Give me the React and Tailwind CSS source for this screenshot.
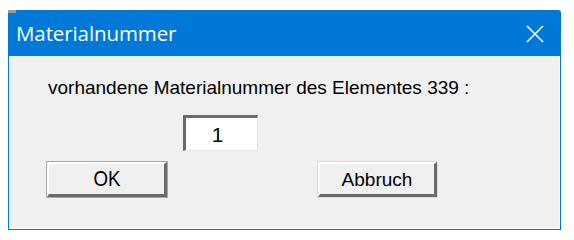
import React from "react";

export default function App() {
  return (
    <div className="w-[574px] h-[240px] bg-white relative overflow-hidden">
      <div className="absolute left-[8px] top-[10px] w-[8px] h-[3px] bg-[#9a9a9a]" />
      <div className="ml-[8px] mt-[10px] w-[553px] h-[220px] flex flex-col bg-[#0078d7] rounded-tr-[3px]">
        <div className="h-[46px] flex items-center justify-between pl-[8px] pr-[16px] shrink-0">
          <span className="text-white text-[20.5px] leading-none font-['Open_Sans',sans-serif] tracking-[-0.1px]">
            Materialnummer
          </span>
          <svg width="20" height="18" viewBox="0 0 20 18" className="mt-[2px]">
            <path d="M2 1 L18 17 M18 1 L2 17" stroke="white" strokeWidth="1.6" fill="none" />
          </svg>
        </div>
        <div className="flex-1 mx-[1px] mb-[1px] bg-[#f0f0f0] border-l border-r border-b border-white flex flex-col font-['Liberation_Sans',Arial,sans-serif] text-black">
          <div className="pl-[38px] pt-[20px] text-[19px] leading-[24px]">
            vorhandene Materialnummer des Elementes 339 :
          </div>
          <div className="pl-[173px] mt-[15px]">
            <div className="w-[75px] h-[36px] bg-white border-t-[3px] border-l-[3px] border-b border-r border-t-[#6a6a6a] border-l-[#6a6a6a] border-b-[#e4e4e4] border-r-[#e4e4e4] flex items-center justify-center pr-[8px] text-[21px] leading-none">
              1
            </div>
          </div>
          <div className="flex pl-[37px] mt-[11px] gap-[151px]">
            <div className="w-[120px] h-[35px] bg-[#f0f0f0] border-t-2 border-l-2 border-b-[3px] border-r-[3px] border-t-[#ffffff] border-l-[#ffffff] border-b-[#6a6a6a] border-r-[#6a6a6a] shadow-[0_0_0_1px_#a8a8a8] flex items-center justify-center text-[22px] leading-none">
              <span className="inline-block scale-x-[0.85]">OK</span>
            </div>
            <div className="w-[119px] h-[35px] bg-[#f0f0f0] border-t-2 border-l-2 border-b-[3px] border-r-[3px] border-t-[#ffffff] border-l-[#ffffff] border-b-[#6a6a6a] border-r-[#6a6a6a] shadow-[0_0_0_1px_#dcdcdc] flex items-center justify-center text-[19px] leading-none">
              Abbruch
            </div>
          </div>
        </div>
      </div>
    </div>
  );
}
